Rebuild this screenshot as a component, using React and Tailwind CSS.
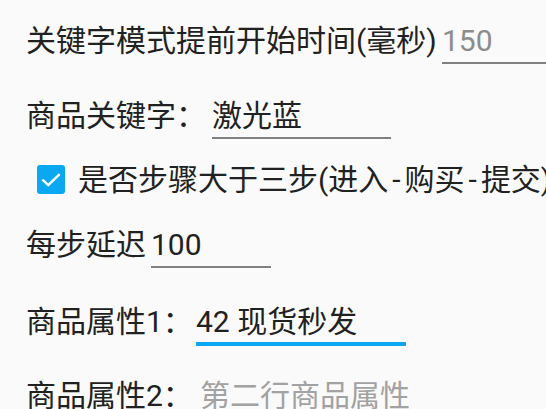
import React, { useState } from 'react';

const font = { fontFamily: "Roboto, 'Noto Sans CJK SC', sans-serif" };

const FieldRow = ({ label, labelWidth, value, placeholder, focused, fieldWidth, className }) => (
  <div className={`flex items-start whitespace-nowrap ${className}`}>
    <span className={`shrink-0 text-[#212121] leading-[34px] ${labelWidth}`}>{label}</span>
    <div
      className={`shrink-0 leading-[34px] ${fieldWidth} ${
        focused ? 'pb-[3px] border-b-[4px] border-[#0aa8f0]' : 'pb-[4px] border-b-2 border-[#808080]'
      }`}
    >
      {value ? (
        <span className="text-[#212121]">{value}</span>
      ) : (
        <span className="text-[#a2a2a2]">{placeholder}</span>
      )}
    </div>
  </div>
);

const App = () => {
  const [checked, setChecked] = useState(true);

  return (
    <div className="w-[546px] h-[409px] overflow-hidden bg-[#fafafa] text-[30px]" style={font}>
      <div className="pl-[26px] pt-[24px]">
        <div className="flex items-start whitespace-nowrap">
          <span className="shrink-0 w-[416px] text-[#212121] leading-[34px]">关键字模式提前开始时间(毫秒)</span>
          <div className="shrink-0 w-[200px] leading-[34px] pb-[4px] border-b-2 border-[#808080] text-[#8c8c8c]">
            150
          </div>
        </div>

        <FieldRow
          className="mt-[35px]"
          label="商品关键字："
          labelWidth="w-[186px]"
          value="激光蓝"
          fieldWidth="w-[179px]"
        />

        <div className="h-[81px] flex items-center whitespace-nowrap">
          <button
            type="button"
            onClick={() => setChecked(!checked)}
            className={`ml-[11px] w-[28px] h-[29px] rounded-[3px] flex items-center justify-center shrink-0 ${
              checked ? 'bg-[#0aa8f0]' : 'border-2 border-[#757575]'
            }`}
          >
            {checked && (
              <svg width="22" height="22" viewBox="0 0 24 24" fill="none">
                <path d="M3.5 12.5 L9 17.5 L20.5 6.5" stroke="white" strokeWidth="2.6" strokeLinecap="square" />
              </svg>
            )}
          </button>
          <span className="ml-[13px] text-[#212121] leading-[34px]">
            是否步骤大于三步(进入<span className="mx-[4px]">-</span>购买<span className="mx-[4px]">-</span>提交)
          </span>
        </div>

        <FieldRow
          className="mt-[8px]"
          label="每步延迟"
          labelWidth="w-[125px]"
          value="100"
          fieldWidth="w-[120px]"
        />

        <FieldRow
          className="mt-[37px]"
          label="商品属性1："
          labelWidth="w-[170px]"
          value="42 现货秒发"
          focused
          fieldWidth="w-[210px]"
        />

        <FieldRow
          className="mt-[33px]"
          label="商品属性2："
          labelWidth="w-[174px]"
          placeholder="第二行商品属性"
          fieldWidth="w-[240px]"
        />
      </div>
    </div>
  );
};

export default App;
